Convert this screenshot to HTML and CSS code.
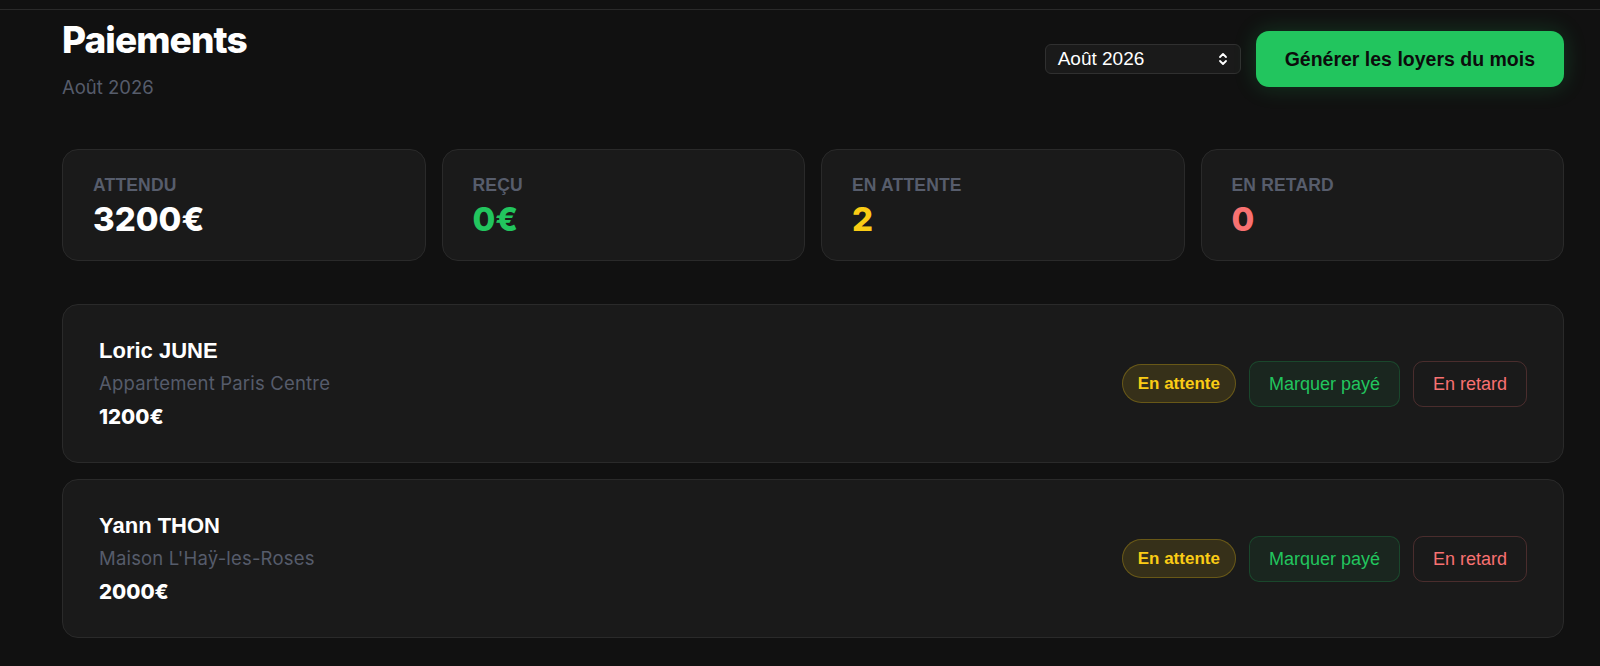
FILE: index.html
```html
<!DOCTYPE html>
<html lang="fr">
<head>
<meta charset="utf-8">
<title>Paiements</title>
<link rel="stylesheet" href="styles.css">
</head>
<body>
<div class="topbar"></div>
<main class="page">
  <header class="head">
    <div class="head-left">
      <h1 class="title">Paiements</h1>
      <div class="subtitle">Août 2026</div>
    </div>
    <div class="head-right">
      <div class="select">
        <span>Août 2026</span>
        <svg class="chev" width="10" height="14" viewBox="0 0 10 14" fill="none" stroke="#ffffff" stroke-width="1.8" stroke-linecap="round" stroke-linejoin="round"><path d="M2 5 L5 2 L8 5"/><path d="M2 9 L5 12 L8 9"/></svg>
      </div>
      <button class="btn-primary">Générer les loyers du mois</button>
    </div>
  </header>

  <section class="stats">
    <div class="stat">
      <div class="stat-label">ATTENDU</div>
      <div class="stat-value">3200€</div>
    </div>
    <div class="stat">
      <div class="stat-label">REÇU</div>
      <div class="stat-value green">0€</div>
    </div>
    <div class="stat">
      <div class="stat-label">EN ATTENTE</div>
      <div class="stat-value yellow">2</div>
    </div>
    <div class="stat">
      <div class="stat-label">EN RETARD</div>
      <div class="stat-value red">0</div>
    </div>
  </section>

  <section class="list">
    <div class="pay">
      <div class="pay-info">
        <div class="pay-name">Loric JUNE</div>
        <div class="pay-prop">Appartement Paris Centre</div>
        <div class="pay-amount">1200€</div>
      </div>
      <div class="pay-actions">
        <span class="pill">En attente</span>
        <button class="btn-paid">Marquer payé</button>
        <button class="btn-late">En retard</button>
      </div>
    </div>
    <div class="pay">
      <div class="pay-info">
        <div class="pay-name">Yann THON</div>
        <div class="pay-prop">Maison L'Haÿ-les-Roses</div>
        <div class="pay-amount">2000€</div>
      </div>
      <div class="pay-actions">
        <span class="pill">En attente</span>
        <button class="btn-paid">Marquer payé</button>
        <button class="btn-late">En retard</button>
      </div>
    </div>
  </section>
</main>
</body>
</html>
```

FILE: styles.css
```css
* { box-sizing: border-box; }
html, body { margin: 0; padding: 0; }
body {
  background: #111111;
  color: #ffffff;
  font-family: "Liberation Sans", Arial, sans-serif;
  height: 666px;
  overflow: hidden;
}
.topbar {
  height: 10px;
  border-bottom: 1px solid #2a2a2a;
}
.page {
  margin: 0 36px 0 62px;
  padding-top: 7px;
}
.head {
  display: flex;
  align-items: center;
  justify-content: space-between;
}
.title {
  margin: 0;
  font-family: Inter, sans-serif;
  font-weight: 800;
  font-size: 37px;
  line-height: 46px;
  letter-spacing: -0.025em;
}
.subtitle {
  margin-top: 12px;
  font-family: Inter, sans-serif;
  font-size: 18.5px;
  line-height: 24px;
  color: #565c6b;
}
.head-right {
  display: flex;
  align-items: center;
  gap: 15px;
  margin-top: 2px;
}
.select {
  width: 196px;
  height: 30px;
  display: flex;
  align-items: center;
  justify-content: space-between;
  padding: 0 12px 0 12px;
  background: #1a1a1a;
  border: 1px solid #303030;
  border-radius: 6px;
  font-size: 19px;
  color: #ffffff;
}
.chev { display: block; }
.btn-primary {
  height: 56px;
  padding: 0 29px;
  border: none;
  border-radius: 13px;
  background: #22c55e;
  color: #0c0c0c;
  font-family: "Liberation Sans", Arial, sans-serif;
  font-weight: 700;
  font-size: 19.5px;
  box-shadow: 0 0 22px rgba(34, 197, 94, 0.22);
}
.stats {
  margin-top: 50px;
  display: grid;
  grid-template-columns: repeat(4, 1fr);
  gap: 16px;
}
.stat {
  background: #1a1a1a;
  border: 1px solid #2a2a2a;
  border-radius: 16px;
  padding: 24px 30px 23px;
  display: flex;
  flex-direction: column;
  gap: 5px;
}
.stat-label {
  font-weight: 700;
  font-size: 17.5px;
  line-height: 22px;
  letter-spacing: 0.01em;
  color: #575d6c;
}
.stat-value {
  font-family: Inter, sans-serif;
  font-weight: 800;
  font-size: 33px;
  line-height: 36px;
  color: #ffffff;
}
.green { color: #22c55e; }
.yellow { color: #facc15; }
.red { color: #f87171; }
.list {
  margin-top: 43px;
  display: flex;
  flex-direction: column;
  gap: 16px;
}
.pay {
  background: #1a1a1a;
  border: 1px solid #2a2a2a;
  border-radius: 16px;
  padding: 29px 36px 29px;
  display: flex;
  align-items: center;
  justify-content: space-between;
}
.pay-info {
  display: flex;
  flex-direction: column;
}
.pay-name {
  font-weight: 700;
  font-size: 22px;
  line-height: 33px;
}
.pay-prop {
  font-family: Inter, sans-serif;
  font-size: 18.5px;
  line-height: 33px;
  letter-spacing: 0.01em;
  color: #565c6b;
}
.pay-amount {
  font-family: Inter, sans-serif;
  font-weight: 800;
  font-size: 20.5px;
  line-height: 33px;
}
.pay-actions {
  display: flex;
  align-items: center;
  gap: 13px;
}
.pill {
  padding: 8px 15px;
  font-weight: 700;
  font-size: 17px;
  line-height: 21px;
  color: #facc15;
  background: rgba(250, 204, 21, 0.13);
  border: 1px solid rgba(250, 204, 21, 0.26);
  border-radius: 999px;
}
.btn-paid, .btn-late {
  padding: 11px 19px;
  font-family: "Liberation Sans", Arial, sans-serif;
  font-size: 18px;
  line-height: 22px;
  border-radius: 10px;
  background: transparent;
}
.btn-paid {
  color: #22c55e;
  background: rgba(34, 197, 94, 0.07);
  border: 1px solid rgba(34, 197, 94, 0.22);
}
.btn-late {
  color: #f87171;
  border: 1px solid rgba(248, 113, 113, 0.22);
}
```
